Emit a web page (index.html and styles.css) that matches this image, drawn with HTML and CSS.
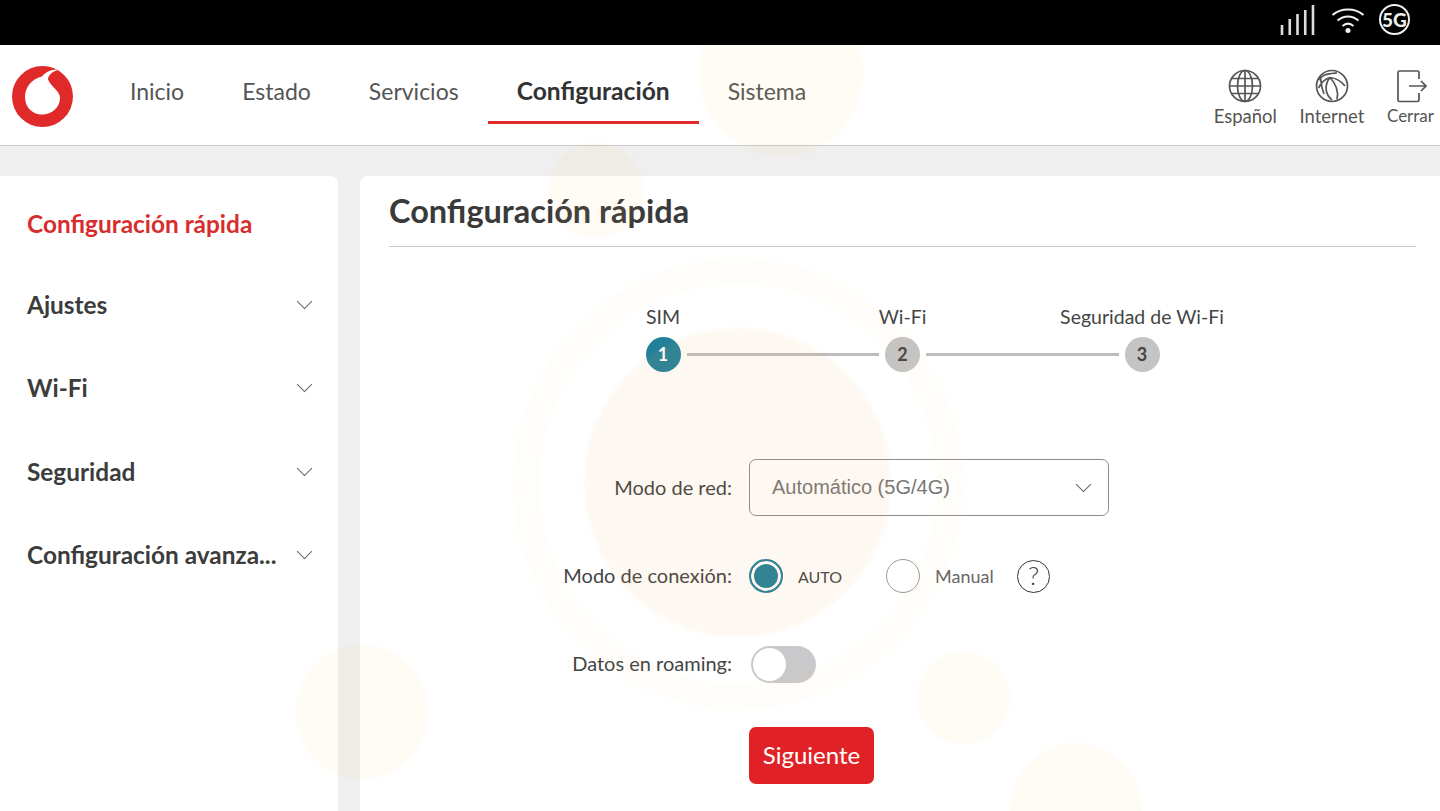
FILE: index.html
```html
<!DOCTYPE html>
<html lang="es">

<head>
    <meta charset="UTF-8">
    <meta name="viewport" content="width=device-width, initial-scale=1.0">
    <title>Configuración rápida</title>
    <link rel="stylesheet" href="styles.css">
</head>

<body>
    <div class="status-bar">
        <svg class="status-signal" width="35" height="30" viewBox="0 0 35 30">
            <path d="M2 30V20M9.750 30V14M17.500 30V9M25.250 30V5M33 30V0" stroke="#dcdcdc" stroke-width="2.600" fill="none"/>
        </svg>
        <svg class="status-wifi" width="34" height="26" viewBox="0 0 34 26">
            <path d="M1.500 8C10 0.500 24 0.500 32.500 8M6.500 13.500C13 8 21 8 27.500 13.500M11.500 19C15 16 19 16 22.500 19" stroke="#f0f0f0" stroke-width="2" fill="none"/>
            <circle cx="17" cy="23.500" r="2.500" fill="#f0f0f0"/>
        </svg>
        <div class="status-5g">5G</div>
    </div>

    <header class="top-nav">
        <svg class="logo" width="61" height="61" viewBox="0 0 61 61">
            <circle cx="30.500" cy="30.500" r="30.500" fill="#e02a2a"/>
            <path d="M44 3.500C39 3.500 33 6.500 30 10.500C19 13 13 22 13 31C13 41 20 48.500 30 48.500C40 48.500 48 41 48 32C48 25 40 22 36 13.500C36 9.500 40 5.500 45 4.500Z" fill="#fff"/>
        </svg>
        <nav class="nav-links">
            <a class="nav-link">Inicio</a>
            <a class="nav-link">Estado</a>
            <a class="nav-link">Servicios</a>
            <a class="nav-link active">Configuración</a>
            <a class="nav-link">Sistema</a>
        </nav>
        <div class="nav-tools">
            <div class="tool tool-lang">
                <svg width="34" height="34" viewBox="0 0 34 34" fill="none" stroke="#555" stroke-width="1.700">
                    <circle cx="17" cy="17" r="15.500"/>
                    <ellipse cx="17" cy="17" rx="7.500" ry="15.500"/>
                    <path d="M17 1.500V32.500M1.500 17H32.500M3.500 9.500H30.500M3.500 24.500H30.500"/>
                </svg>
                <span>Español</span>
            </div>
            <div class="tool tool-net">
                <svg width="34" height="34" viewBox="0 0 34 34" fill="none" stroke="#555" stroke-width="1.700">
                    <circle cx="17" cy="17" r="15.500"/>
                    <path d="M4 11C8 5 12 5 22 4M3.500 19C6 14 10 10 15 8.500C20 9 26 12 30 17M15 8.500C9 16 10 25 17 31M15 8.500C21 15 24 22 22 30.500M5.500 8C6 14 6 18 9 25"/>
                </svg>
                <span>Internet</span>
            </div>
            <div class="tool tool-exit">
                <svg width="30" height="34" viewBox="0 0 30 34" fill="none" stroke="#555" stroke-width="1.700">
                    <path d="M22 10V3.500C22 2.500 21.500 2 20.500 2H2.500C1.500 2 1 2.500 1 3.500V31C1 32 1.500 32.500 2.500 32.500H20.500C21.500 32.500 22 32 22 31V24"/>
                    <path d="M12 17H28.500M24 12L29 17L24 22"/>
                </svg>
                <span>Cerrar</span>
            </div>
        </div>
    </header>

    <main class="page">
        <aside class="sidebar">
            <div class="side-item current">Configuración rápida</div>
            <div class="side-item">Ajustes <span class="caret"></span></div>
            <div class="side-item">Wi-Fi <span class="caret"></span></div>
            <div class="side-item">Seguridad <span class="caret"></span></div>
            <div class="side-item">Configuración avanza... <span class="caret"></span></div>
        </aside>

        <section class="content">
            <h1>Configuración rápida</h1>

            <div class="stepper">
                <div class="step">
                    <span class="step-label">SIM</span>
                    <span class="step-num on">1</span>
                </div>
                <div class="step-line"></div>
                <div class="step">
                    <span class="step-label">Wi-Fi</span>
                    <span class="step-num">2</span>
                </div>
                <div class="step-line"></div>
                <div class="step">
                    <span class="step-label">Seguridad de Wi-Fi</span>
                    <span class="step-num">3</span>
                </div>
            </div>

            <form class="quick-form">
                <div class="form-row row-select">
                    <label>Modo de red:</label>
                    <div class="select">Automático (5G/4G) <span class="caret"></span></div>
                </div>
                <div class="form-row row-radio">
                    <label>Modo de conexión:</label>
                    <span class="radio checked"></span>
                    <span class="radio-text auto">AUTO</span>
                    <span class="radio"></span>
                    <span class="radio-text manual">Manual</span>
                    <span class="help">?</span>
                </div>
                <div class="form-row row-toggle">
                    <label>Datos en roaming:</label>
                    <span class="toggle"><span class="knob"></span></span>
                </div>
                <div class="form-row row-button">
                    <label></label>
                    <button type="button" class="next">Siguiente</button>
                </div>
            </form>
        </section>
    </main>

    <!-- faint watermark that sits over everything below the status bar -->
    <div class="watermark">
        <div class="blob blob-top"></div>
        <div class="blob blob-small"></div>
        <div class="blob blob-big"></div>
        <div class="blob-ring"></div>
        <div class="blob blob-left"></div>
        <div class="blob blob-right"></div>
        <div class="blob blob-bottom"></div>
    </div>
</body>

</html>
```

FILE: styles.css
```css
html {
    font-family: "Lato", "Open Sans", sans-serif;
    color: #333;
}

body {
    margin: 0;
    height: 811px;
    overflow: hidden;
    background-color: #efefef;
    position: relative;
}

.status-bar {
    background-color: #000;
    height: 45px;
    display: flex;
    align-items: center;
    justify-content: flex-end;
    padding-right: 30px;
    color: #eee;
}

.status-signal {
    margin-right: 16px;
    margin-bottom: 5px;
}

.status-wifi {
    margin-right: 14px;
    margin-bottom: 5px;
}

.status-5g {
    width: 27px;
    height: 27px;
    border: 2px solid #f0f0f0;
    border-radius: 50%;
    font-size: 19px;
    font-weight: 900;
    line-height: 27px;
    text-align: center;
    margin-bottom: 7px;
}

.top-nav {
    background-color: #fff;
    height: 100px;
    border-bottom: 1px solid #c9c9c9;
    display: flex;
    align-items: center;
    padding-left: 12px;
}

.logo {
    flex: none;
    margin-top: 2px;
}

.nav-links {
    display: flex;
    align-self: stretch;
    margin-left: 28px;
}

.nav-link {
    display: block;
    padding: 31px 29px 0;
    font-size: 23px;
    line-height: 30px;
    color: #555;
    height: 76px;
    box-sizing: border-box;
}

.nav-link.active {
    color: #333;
    font-weight: 700;
    font-size: 24.600px;
    border-bottom: 3px solid #e02a2a;
    height: 79px;
}

.nav-tools {
    margin-left: auto;
    display: flex;
    padding-right: 6px;
    padding-top: 6px;
    gap: 22.500px;
}

.tool {
    display: flex;
    flex-direction: column;
    align-items: center;
    font-size: 18.500px;
    line-height: 22px;
    color: #555;
    gap: 2px;
}

.tool-exit {
    font-size: 17px;
}

.tool-exit svg {
    margin-left: 3px;
}

.page {
    display: flex;
    gap: 22px;
    padding-top: 30px;
}

.sidebar {
    width: 338px;
    height: 640px;
    background-color: #fff;
    border-radius: 0 8px 0 0;
    padding-top: 9px;
    box-sizing: border-box;
}

.side-item {
    height: 83.500px;
    padding: 0 26px 0 27px;
    display: flex;
    align-items: center;
    justify-content: space-between;
    font-size: 24.400px;
    font-weight: 700;
    color: #3c3c3c;
    white-space: nowrap;
}

.side-item.current {
    height: 77.500px;
    color: #d92d2d;
}

.caret {
    width: 10px;
    height: 10px;
    border-right: 1.500px solid #666;
    border-bottom: 1.500px solid #666;
    transform: rotate(45deg);
    margin-top: -6px;
    margin-right: 2px;
    flex: none;
}

.content {
    flex: 1;
    height: 640px;
    background-color: #fff;
    border-radius: 8px 0 0 0;
    padding: 0 24px 0 29px;
    box-sizing: border-box;
}

h1 {
    margin: 0;
    height: 70px;
    line-height: 70px;
    font-size: 32.500px;
    font-weight: 700;
    color: #3a3a3a;
    border-bottom: 1px solid #c9c9c9;
}

.stepper {
    display: flex;
    justify-content: center;
    align-items: flex-end;
    margin-top: 57px;
    gap: 6px;
}

.step {
    width: 35px;
    display: flex;
    flex-direction: column;
    align-items: center;
    gap: 8px;
}

.step-label {
    font-size: 19.500px;
    line-height: 25px;
    color: #444;
    white-space: nowrap;
}

.step-num {
    width: 35px;
    height: 35px;
    border-radius: 50%;
    background-color: #c4c4c4;
    color: #444;
    font-size: 18px;
    font-weight: 700;
    line-height: 35px;
    text-align: center;
}

.step-num.on {
    background-color: #22809a;
    color: #fff;
}

.step-line {
    width: 192.500px;
    height: 3px;
    background-color: #bdbdbd;
    margin-bottom: 16px;
}

.quick-form {
    margin-top: 87px;
}

.form-row {
    display: flex;
    align-items: center;
}

.form-row label {
    width: 343px;
    margin-right: 17px;
    padding-bottom: 2px;
    flex: none;
    text-align: right;
    font-size: 20px;
    color: #444;
}

.row-select {
    height: 57px;
}

.select {
    width: 360px;
    height: 57px;
    box-sizing: border-box;
    border: 1px solid #8c8c8c;
    border-radius: 7px;
    padding: 0 17px 0 22px;
    display: flex;
    align-items: center;
    justify-content: space-between;
    font-family: "Liberation Sans", sans-serif;
    font-size: 20px;
    color: #777;
}

.row-radio {
    margin-top: 43px;
    height: 34px;
}

.radio {
    width: 34px;
    height: 34px;
    box-sizing: border-box;
    border: 1px solid #9a9a9a;
    border-radius: 50%;
    background-color: #fff;
    flex: none;
}

.radio.checked {
    border: 2px solid #22809a;
    background-color: #22809a;
    box-shadow: inset 0 0 0 3px #fff;
}

.radio-text {
    font-size: 16px;
    margin-left: 15px;
    color: #444;
}

.radio-text.auto {
    width: 88px;
}

.radio-text.manual {
    font-size: 18px;
    color: #666;
    width: 82px;
}

.help {
    width: 33px;
    height: 33px;
    box-sizing: border-box;
    border: 1.500px solid #333;
    border-radius: 50%;
    font-size: 26px;
    font-weight: 300;
    line-height: 29px;
    text-align: center;
    color: #444;
}

.row-toggle {
    margin-top: 52px;
    height: 38px;
}

.toggle {
    width: 65px;
    height: 37px;
    margin-left: 2px;
    background-color: #c9c9cb;
    border-radius: 19px;
    display: block;
}

.knob {
    display: block;
    width: 33px;
    height: 33px;
    margin: 2px;
    border-radius: 50%;
    background-color: #fff;
}

.row-button {
    margin-top: 44px;
}

.next {
    width: 125px;
    height: 57px;
    border: 0;
    border-radius: 7px;
    background-color: #e02226;
    color: #fff;
    font-family: inherit;
    font-size: 24px;
    padding: 0 0 2px;
}

.watermark {
    position: absolute;
    inset: 45px 0 0 0;
    pointer-events: none;
    overflow: hidden;
}

.blob,
.blob-ring {
    position: absolute;
    border-radius: 50%;
    box-sizing: border-box;
    filter: blur(1.500px);
}

.blob {
    background-color: rgba(250, 195, 90, 0.06);
}

.blob-ring {
    left: 513px;
    top: 213px;
    width: 450px;
    height: 452px;
    border: 26px solid rgba(250, 195, 90, 0.04);
}

.blob-top {
    left: 699px;
    top: -53px;
    width: 164px;
    height: 164px;
}

.blob-small {
    left: 548px;
    top: 98px;
    width: 95px;
    height: 95px;
}

.blob-big {
    left: 584px;
    top: 283px;
    width: 307px;
    height: 309px;
    background-color: rgba(245, 165, 90, 0.08);
}

.blob-left {
    left: 296px;
    top: 600px;
    width: 132px;
    height: 134px;
}

.blob-right {
    left: 917px;
    top: 607px;
    width: 93px;
    height: 92px;
}

.blob-bottom {
    left: 1010px;
    top: 698px;
    width: 132px;
    height: 132px;
}
```
